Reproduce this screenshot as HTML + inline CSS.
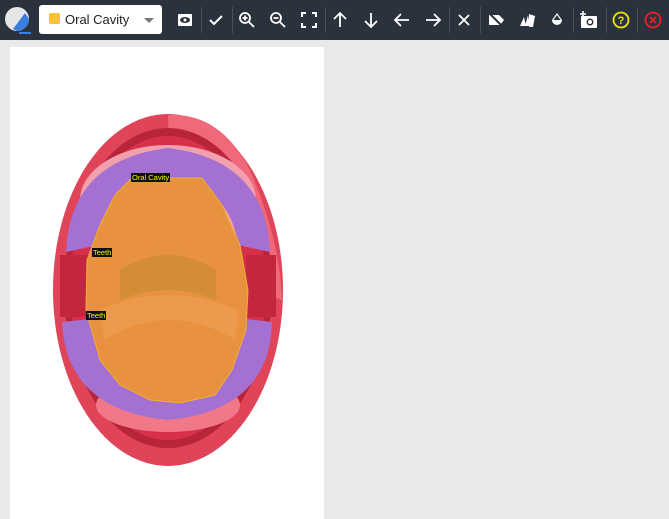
<!DOCTYPE html>
<html><head><style>
body{margin:0;width:669px;height:519px;background:#e9e9e9;font-family:"Liberation Sans",sans-serif;overflow:hidden;position:relative}
.tb{position:absolute;left:0;top:0;width:669px;height:40px;background:#29323d}
.sep{position:absolute;top:7px;width:1px;height:26px;background:#4a525c}
.ic{position:absolute;top:10px;width:20px;height:20px}
.dd{position:absolute;left:39px;top:5px;width:123px;height:29px;background:#fff;border-radius:3px}
.panel{position:absolute;left:10px;top:47px;width:314px;height:472px;background:#fff}
.lbl{position:absolute;background:#111;color:#f5f500;font-size:7.5px;line-height:9px;padding:0 1px}
</style></head><body>
<div class="tb">
<svg style="position:absolute;left:3px;top:5px" width="30" height="30" viewBox="0 0 30 30"><circle cx="14" cy="14" r="12" fill="#e6e6e6"/><path d="M26 14 A12 12 0 0 1 14 26 L10 24 L22 8 Z" fill="#3a7ee0"/><rect x="16" y="27" width="12" height="2" fill="#3a7ee0"/></svg>
<div class="dd"><div style="position:absolute;left:10px;top:8px;width:11px;height:11px;background:#f9c234;border-radius:2px"></div><span style="position:absolute;left:26px;top:7px;font-size:13px;color:#222">Oral Cavity</span><div style="position:absolute;left:105px;top:13px;border:5px solid transparent;border-top-color:#777;border-bottom:0"></div></div>
<svg class="ic" style="left:175px" viewBox="0 0 20 20"><rect x="3" y="4" width="14" height="12" rx="1" fill="#fff"/><ellipse cx="10" cy="10" rx="5" ry="3" fill="#29323d"/><circle cx="10" cy="10" r="1.5" fill="#fff"/></svg>
<div class="sep" style="left:201px"></div>
<svg class="ic" style="left:206px" viewBox="0 0 20 20"><path d="M4 10l4 4 8-8" stroke="#fff" stroke-width="2" fill="none"/></svg>
<div class="sep" style="left:232px"></div>
<svg class="ic" style="left:237px" viewBox="0 0 20 20"><circle cx="8" cy="8" r="5" stroke="#fff" stroke-width="1.8" fill="none"/><path d="M12 12l5 5M5.5 8h5M8 5.5v5" stroke="#fff" stroke-width="1.8"/></svg>
<svg class="ic" style="left:268px" viewBox="0 0 20 20"><circle cx="8" cy="8" r="5" stroke="#fff" stroke-width="1.8" fill="none"/><path d="M12 12l5 5M5.5 8h5" stroke="#fff" stroke-width="1.8"/></svg>
<svg class="ic" style="left:299px" viewBox="0 0 20 20"><path d="M3 7V3h4M13 3h4v4M17 13v4h-4M7 17H3v-4" stroke="#fff" stroke-width="2" fill="none"/></svg>
<div class="sep" style="left:325px"></div>
<svg class="ic" style="left:330px" viewBox="0 0 20 20"><path d="M10 17V3M4 9l6-6 6 6" stroke="#fff" stroke-width="1.8" fill="none"/></svg>
<svg class="ic" style="left:361px" viewBox="0 0 20 20"><path d="M10 3v14M4 11l6 6 6-6" stroke="#fff" stroke-width="1.8" fill="none"/></svg>
<svg class="ic" style="left:392px" viewBox="0 0 20 20"><path d="M17 10H3M9 4l-6 6 6 6" stroke="#fff" stroke-width="1.8" fill="none"/></svg>
<svg class="ic" style="left:423px" viewBox="0 0 20 20"><path d="M3 10h14M11 4l6 6-6 6" stroke="#fff" stroke-width="1.8" fill="none"/></svg>
<div class="sep" style="left:449px"></div>
<svg class="ic" style="left:454px" viewBox="0 0 20 20"><path d="M5 5l10 10M15 5L5 15" stroke="#fff" stroke-width="1.8"/></svg>
<div class="sep" style="left:480px"></div>
<svg class="ic" style="left:486px" viewBox="0 0 20 20"><path d="M3 5h10l5 5-4 5H3z" fill="#fff"/><path d="M3 3l14 14" stroke="#29323d" stroke-width="2"/></svg>
<svg class="ic" style="left:517px" viewBox="0 0 20 20"><path d="M3 16l4-9 2 9zM8 16l3-11 2 11zM12 4l6 2-2 11h-4z" fill="#fff"/></svg>
<svg class="ic" style="left:547px" viewBox="0 0 20 20"><path d="M10 3l5 7a5 5 0 1 1-10 0z" fill="#fff"/><path d="M6.5 10l3.5-5 3.5 5z" fill="#29323d"/></svg>
<div class="sep" style="left:573px"></div>
<svg class="ic" style="left:579px" viewBox="0 0 20 20"><rect x="2" y="6" width="16" height="12" rx="1" fill="#fff"/><circle cx="11" cy="12" r="3.5" fill="#29323d"/><circle cx="11" cy="12" r="2" fill="#fff"/><path d="M4 1v6M1 4h6" stroke="#fff" stroke-width="1.6"/></svg>
<div class="sep" style="left:606px"></div>
<svg class="ic" style="left:611px" viewBox="0 0 20 20"><circle cx="10" cy="10" r="7.5" stroke="#f0e400" stroke-width="1.8" fill="none"/><text x="10" y="14" text-anchor="middle" font-size="11" font-weight="bold" fill="#f0e400" font-family="Liberation Sans">?</text></svg>
<div class="sep" style="left:637px"></div>
<svg class="ic" style="left:643px" viewBox="0 0 20 20"><circle cx="10" cy="10" r="7.5" stroke="#e8202a" stroke-width="1.8" fill="none"/><path d="M7 7l6 6M13 7l-6 6" stroke="#e8202a" stroke-width="1.8"/></svg>
</div>
<div class="panel"></div>
<svg style="position:absolute;left:0;top:0" width="669" height="519">
<ellipse cx="168" cy="290" rx="115" ry="176" fill="#e04458"/>
<path d="M168 115 Q220 112 250 170 Q280 240 282 300 Q170 260 168 115Z" fill="#f0697a"/>
<ellipse cx="168" cy="288" rx="104" ry="160" fill="#b82438"/>
<ellipse cx="168" cy="288" rx="98" ry="152" fill="#d6304a"/>
<ellipse cx="168" cy="200" rx="88" ry="55" fill="#f2a0ae"/>
<ellipse cx="168" cy="405" rx="72" ry="27" fill="#f07888"/>
<path d="M66 252 Q70 160 168 148 Q266 160 270 252 L238 245 Q230 185 168 180 Q106 185 98 245Z" fill="#a471d2"/>
<path d="M62 322 L100 318 Q110 395 168 400 Q226 395 238 318 L272 322 Q270 410 168 420 Q66 410 62 322Z" fill="#a471d2"/>
<rect x="60" y="255" width="30" height="62" fill="#c3273e"/>
<rect x="246" y="255" width="30" height="62" fill="#c3273e"/>
<polygon points="132,178 202,178 222,205 240,245 248,290 246,330 232,370 215,395 180,403 150,400 120,385 100,360 86,310 87,260 100,225 115,195" fill="#e8913f" stroke="#f0b030" stroke-width="1"/>
<path d="M100 310 Q168 280 238 310 L236 340 Q168 300 104 340Z" fill="#ec9a4c"/>
<path d="M120 270 Q168 240 216 270 L216 300 Q168 280 120 300Z" fill="#c48a30" opacity="0.6"/>
</svg>
<div class="lbl" style="left:131px;top:173px">Oral Cavity</div>
<div class="lbl" style="left:92px;top:248px">Teeth</div>
<div class="lbl" style="left:86px;top:311px">Teeth</div>
</body></html>
